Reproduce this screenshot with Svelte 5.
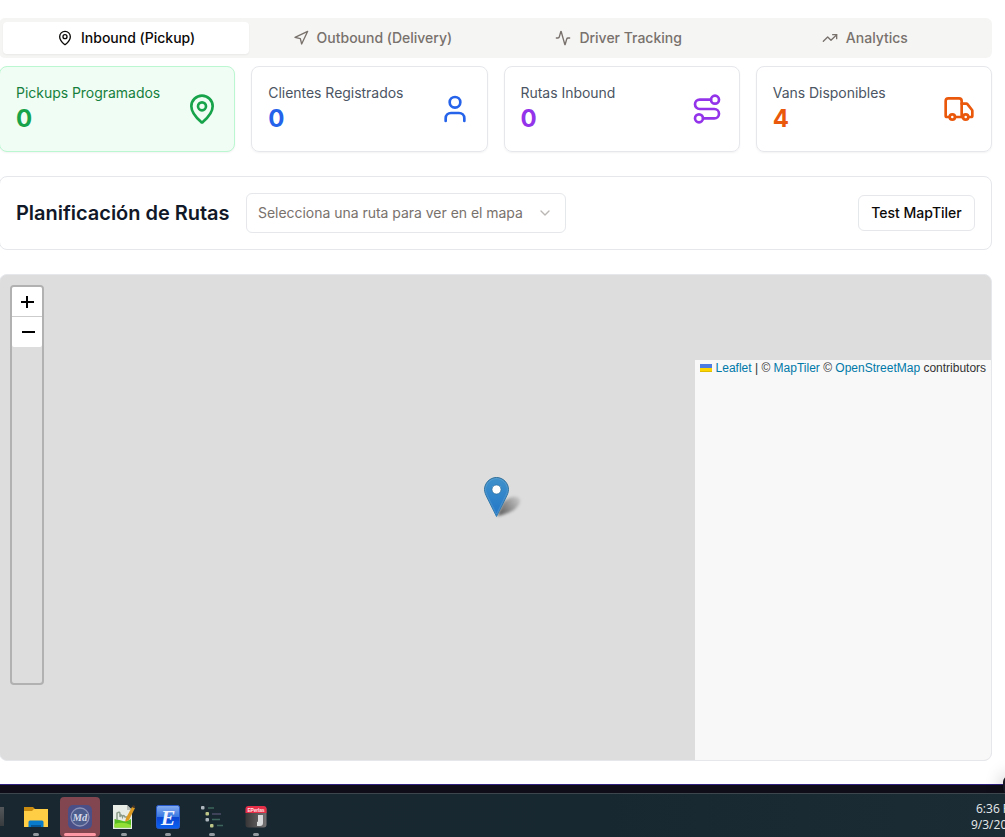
<script>
  const tabs = [
    { label: 'Inbound (Pickup)', icon: 'pin', active: true },
    { label: 'Outbound (Delivery)', icon: 'nav' },
    { label: 'Driver Tracking', icon: 'activity' },
    { label: 'Analytics', icon: 'trend' }
  ];
  const stats = [
    { label: 'Pickups Programados', value: 0, icon: 'pin', tone: 'green' },
    { label: 'Clientes Registrados', value: 0, icon: 'user', tone: 'blue' },
    { label: 'Rutas Inbound', value: 0, icon: 'route', tone: 'purple' },
    { label: 'Vans Disponibles', value: 4, icon: 'truck', tone: 'orange' }
  ];
</script>

{#snippet icon(name, size)}
  <svg width={size} height={size} viewBox="0 0 24 24" fill="none" stroke="currentColor" stroke-width="2" stroke-linecap="round" stroke-linejoin="round">
    {#if name === 'pin'}
      <path d="M20 10c0 4.993-5.539 10.193-7.399 11.799a1 1 0 0 1-1.202 0C9.539 20.193 4 14.993 4 10a8 8 0 0 1 16 0" />
      <circle cx="12" cy="10" r="3" />
    {:else if name === 'nav'}
      <polygon points="3 11 22 2 13 21 11 13 3 11" />
    {:else if name === 'activity'}
      <path d="M22 12h-2.48a2 2 0 0 0-1.93 1.46l-2.35 8.36a.25.25 0 0 1-.48 0L9.24 2.18a.25.25 0 0 0-.48 0l-2.35 8.36A2 2 0 0 1 4.49 12H2" />
    {:else if name === 'trend'}
      <polyline points="22 7 13.5 15.5 8.5 10.5 2 17" />
      <polyline points="16 7 22 7 22 13" />
    {:else if name === 'user'}
      <path d="M19 21v-2a4 4 0 0 0-4-4H9a4 4 0 0 0-4 4v2" />
      <circle cx="12" cy="7" r="4" />
    {:else if name === 'route'}
      <circle cx="6" cy="19" r="3" />
      <path d="M9 19h8.5a3.5 3.5 0 0 0 0-7h-11a3.5 3.5 0 0 1 0-7H15" />
      <circle cx="18" cy="5" r="3" />
    {:else if name === 'truck'}
      <path d="M14 18V6a2 2 0 0 0-2-2H4a2 2 0 0 0-2 2v11a1 1 0 0 0 1 1h2" />
      <path d="M15 18H9" />
      <path d="M19 18h2a1 1 0 0 0 1-1v-3.65a1 1 0 0 0-.22-.624l-3.48-4.35A1 1 0 0 0 17.52 8H14" />
      <circle cx="17" cy="18" r="2" />
      <circle cx="7" cy="18" r="2" />
    {:else}
      <path d="m6 9 6 6 6-6" />
    {/if}
  </svg>
{/snippet}

<div class="screen">
  <main>
    <div class="tabs">
      {#each tabs as t}
        <button class="tab" class:active={t.active}>{@render icon(t.icon, 16)}<span>{t.label}</span></button>
      {/each}
    </div>

    <div class="stats">
      {#each stats as s}
        <section class="card {s.tone}">
          <div>
            <p class="label">{s.label}</p>
            <p class="value">{s.value}</p>
          </div>
          {@render icon(s.icon, 32)}
        </section>
      {/each}
    </div>

    <section class="toolbar">
      <h2>Planificación de Rutas</h2>
      <button class="select"><span>Selecciona una ruta para ver en el mapa</span>{@render icon('chevron', 16)}</button>
      <button class="test">Test MapTiler</button>
    </section>

    <section class="map">
      <div class="zoom">
        <button class="in"><svg width="30" height="30" viewBox="0 0 30 30"><path d="M9 15h13M15 9v12" /></svg></button>
        <button class="out"><svg width="30" height="30" viewBox="0 0 30 30"><path d="M10 15h13" /></svg></button>
      </div>
      <svg class="marker" width="46" height="46" viewBox="0 0 46 46">
        <defs>
          <linearGradient id="pin" x1="0" y1="0" x2="0" y2="1"><stop offset="0" stop-color="#3f91ca" /><stop offset="1" stop-color="#2277c8" /></linearGradient>
          <linearGradient id="edge" x1="0" y1="0" x2="0" y2="1"><stop offset="0" stop-color="#2e6c97" /><stop offset="1" stop-color="#3883b7" /></linearGradient>
          <linearGradient id="fade" gradientUnits="userSpaceOnUse" x1="14" y1="38" x2="38" y2="20"><stop offset="0" stop-color="#000" stop-opacity=".6" /><stop offset=".5" stop-color="#000" stop-opacity=".32" /><stop offset="1" stop-color="#000" stop-opacity=".04" /></linearGradient>
          <filter id="soft" filterUnits="userSpaceOnUse" x="0" y="0" width="46" height="46"><feGaussianBlur stdDeviation="1.6" /></filter>
        </defs>
        <path d="M13 39 19 25Q29 17 35 21Q39 25 30 33Q23 37 13 39Z" fill="url(#fade)" filter="url(#soft)" />
        <path d="M12.500 .5C5.900 .5 .5 6.100 .5 12.500c0 2.800 1.400 5.700 2.300 7.500L12.500 39.500 22.200 20c.9-1.800 2.300-4.500 2.300-7.500C24.500 6.100 19.100 .5 12.500 .5Z" fill="url(#pin)" stroke="url(#edge)" />
        <path d="M12.500 1.600C6.500 1.600 1.600 6.600 1.600 12.500c0 2.600 1.300 5.400 2.200 7.100l8.700 17.700 8.700-17.700c.9-1.700 2.200-4.300 2.200-7.100 0-5.900-4.900-10.900-10.900-10.900Z" fill="none" stroke="#fff" stroke-opacity=".13" />
        <circle cx="12.500" cy="12.500" r="4.500" fill="#fff" stroke="#2e6c97" stroke-opacity=".65" />
      </svg>
      <div class="credit">
        <svg width="12" height="8" viewBox="0 0 12 8"><path fill="#4C7BE1" d="M0 0h12v4H0z" /><path fill="#FFD500" d="M0 4h12v3H0z" /><path fill="#E0BC00" d="M0 7h12v1H0z" /></svg>
        <a href="#leaflet">Leaflet</a> | © <a href="#maptiler">MapTiler</a> © <a href="#osm">OpenStreetMap</a> contributors
      </div>
    </section>
  </main>

  <div class="edge"></div>
  <div class="corner"></div>
  <footer>
    <div class="app first"><i class="stub"></i></div>
    <div class="app">
      <svg width="24" height="24" viewBox="0 0 24 24"><path d="M0 2h9l2 2-2 4H0z" fill="#c98b10" /><path d="M0 6h8l2-2h14v18H0z" fill="#ffce45" /><path d="M4.500 22v-5q0-1.500 1.500-1.500h12q1.500 0 1.500 1.500v5z" fill="#087bca" /><path d="M7 22v-2h10v2z" fill="#075696" /></svg>
      <b></b>
    </div>
    <div class="app on">
      <svg width="24" height="24" viewBox="0 0 24 24"><rect width="24" height="24" rx="5" fill="#4a5087" /><circle cx="12" cy="12" r="9" fill="#4c5c8c" stroke="#8d92b8" stroke-width="1.300" /><text x="12" y="15.800" text-anchor="middle" font-size="10.500" font-weight="700" font-style="italic" fill="#d5d8e8" font-family="Liberation Serif, serif">Md</text></svg>
      <b></b>
    </div>
    <div class="app">
      <svg width="24" height="24" viewBox="0 0 24 24"><path d="M1 0h14l5 5v19H1z" fill="#e8ece6" /><path d="M15 0v5h5" fill="#b7bdb6" /><path d="M2.500 14Q8 15 11 16t8-2v8.500H2.500z" fill="#57bd23" /><path d="M2.500 19q8-3 16.500 1v2.500H2.500z" fill="#92df36" /><path d="M5 15V8q3-2 3 1v3q1-4 2.500 0 1-3 2.500 0h3v3" fill="none" stroke="#8a9a88" stroke-width="1.500" /><path d="m13 17 1-4 6-11 3 1-6 12z" fill="#dc9c24" /><path d="m20 2 1-2 2 1v2z" fill="#493624" /></svg>
      <b></b>
    </div>
    <div class="app">
      <svg width="24" height="24" viewBox="0 0 24 24"><defs><linearGradient id="blue" x1="0" y1="0" x2="0" y2="1"><stop offset="0" stop-color="#86adf0" /><stop offset=".48" stop-color="#3a78e2" /><stop offset=".52" stop-color="#0c46d2" /><stop offset="1" stop-color="#0a62f2" /></linearGradient></defs><rect x=".5" y=".5" width="23" height="23" rx="2" fill="url(#blue)" stroke="#2758ca" /><text x="12" y="19.500" text-anchor="middle" font-size="22" font-weight="700" font-style="italic" fill="#f1f4ff" font-family="Liberation Serif, serif">E</text></svg>
      <b></b>
    </div>
    <div class="app">
      <svg width="24" height="24" viewBox="0 0 24 24"><g fill="#aeb7bd"><rect x="1" y="1" width="3.500" height="3.500" rx="1" /><rect x="5.500" y="13" width="3.500" height="3.500" rx="1" /></g><g fill="#bdc587"><rect x="5.500" y="7" width="3.500" height="3.500" rx="1" /><rect x="10" y="19" width="3.500" height="3.500" rx="1" /></g><path d="M8 3h6M12 14.500h8M17 20.500h6" stroke="#3d655b" stroke-width="1.700" /><path d="M12 9h9" stroke="#464963" stroke-width="1.700" /></svg>
      <b></b>
    </div>
    <div class="app">
      <svg width="24" height="24" viewBox="0 0 24 24"><defs><linearGradient id="grey"><stop offset="0" stop-color="#373536" /><stop offset="1" stop-color="#777475" /></linearGradient></defs><rect x="1.500" y="1.500" width="21" height="21" rx="3" fill="url(#grey)" /><path d="M1.500 8V4q0-3 3-3h15q3 0 3 3v4z" fill="#e52e48" /><text x="12" y="6.800" text-anchor="middle" font-size="5" font-weight="700" textLength="17" fill="#ffe2e5" font-family="Liberation Sans, sans-serif">EPerlas</text><path d="M14 10h5v8q0 3-3 3h-3v-4q1 0 1-1z" fill="#d9dadb" /></svg>
      <b></b>
    </div>
    <div class="clock"><span>6:36 PM</span><span>9/3/20</span></div>
  </footer>
</div>

<style>
  :global(body) { margin: 0; overflow: hidden; background: #fff; }
  .screen { position: relative; width: 1005px; height: 837px; overflow: hidden; display: flex; flex-direction: column; background: #fff; font-family: Inter, sans-serif; }
  .screen * { box-sizing: border-box; }
  svg { display: block; flex: none; }
  button { font: inherit; padding: 0; border: 0; background: #fff; }
  h2, p { margin: 0; }
  main { width: 993px; height: 784px; flex: none; margin-left: -1px; padding-top: 18px; }
  .tabs { display: grid; grid-template-columns: repeat(4, 1fr); height: 40px; padding: 4px; border-radius: 6px; background: #f5f5f4; }
  .tab { display: flex; align-items: center; justify-content: center; gap: 8px; border-radius: 4px; background: none; color: #78716c; font-size: 14px; font-weight: 500; line-height: 20px; letter-spacing: -.01px; }
  .tab.active { background: #fff; color: #0c0a09; box-shadow: 0 1px 2px #0000000d; }
  .stats { display: grid; grid-template-columns: repeat(4, 1fr); gap: 16px; margin-top: 8px; }
  .card { display: flex; align-items: center; justify-content: space-between; height: 86px; padding: 0 16px; border: 1px solid #e5e7eb; border-radius: 8px; box-shadow: 0 1px 2px #0000000d; }
  .label { font-size: 14px; line-height: 20px; color: #4b5563; letter-spacing: -.03px; }
  .value { font-size: 24px; line-height: 32px; font-weight: 700; }
  .green { color: #16a34a; background: #f0fdf4; border-color: #bbf7d0; }
  .green .label { color: #15803d; }
  .blue { color: #2563eb; }
  .purple { color: #9333ea; }
  .orange { color: #ea580c; }
  .toolbar { display: flex; align-items: center; gap: 16px; height: 74px; margin-top: 24px; padding: 0 16px; border: 1px solid #e5e7eb; border-radius: 8px; }
  h2 { width: 214px; font-size: 20px; line-height: 28px; font-weight: 600; letter-spacing: -.03px; color: #111827; white-space: nowrap; }
  .select { width: 320px; height: 40px; display: flex; align-items: center; justify-content: space-between; padding: 0 12px 0 11px; border: 1px solid #e5e7eb; border-radius: 6px; font-size: 14px; line-height: 20px; letter-spacing: -.03px; color: #78716c; white-space: nowrap; }
  .select span { padding-bottom: 1px; }
  .select svg { opacity: .5; }
  .test { width: 117px; height: 36px; margin-left: auto; padding-bottom: 1px; border: 1px solid #e5e7eb; border-radius: 6px; font-size: 14px; line-height: 20px; font-weight: 500; color: #0c0a09; }
  .map { position: relative; display: flex; justify-content: space-between; height: 487px; margin-top: 24px; border: 1px solid #e5e7eb; border-radius: 8px; overflow: hidden; background: #ddd; }
  .zoom { width: 34px; height: 400px; margin: 10px 0 0 10px; border: 2px solid #b1b1b1; border-radius: 4px; }
  .zoom button { display: block; width: 30px; height: 30px; overflow: hidden; }
  .zoom svg { fill: none; stroke: #000; stroke-width: 2; }
  .zoom .in { border-bottom: 1px solid #ccc; border-radius: 2px 2px 0 0; }
  .zoom .out { border-radius: 0 0 2px 2px; }
  .marker { position: absolute; left: 484px; top: 201.500px; }
  .credit { display: flex; align-items: flex-start; width: 296px; height: 400px; margin-top: 85px; padding: 0 5px; background: #f8f8f8; color: #333; font: 12px/16.800px "Liberation Sans", sans-serif; white-space: pre; }
  .credit svg { margin: 4px 3.600px 0 0; }
  .credit a { color: #0078a8; text-decoration: none; }
  .edge { flex: none; height: 9px; border-top: 1px solid #302080; background: #0f0e18; }
  .corner { position: absolute; left: 1003px; top: 776px; width: 12px; height: 18px; border-radius: 7px; background: #191923; box-shadow: 0 0 18px #0005; }
  footer { position: relative; display: flex; height: 44px; border-top: 1px solid #3c464c; background: linear-gradient(90deg, #182730, #182831 60%, #1b2c35); }
  .app { position: relative; width: 40px; height: 40px; margin: 3px 4px 0 0; padding: 8px; border-radius: 4px; flex: none; }
  .app.first { width: 12px; padding: 10px 0 0; }
  .stub { display: block; width: 4px; height: 19px; background: linear-gradient(#55585b, #373b3e); }
  .app b { position: absolute; left: 17px; bottom: 1px; width: 6px; height: 3px; border-radius: 2px; background: #929a9f; }
  .app.on { background: #81464f; }
  .app.on b { left: 4px; width: 32px; background: #ff98a5; }
  .clock { position: absolute; left: 971px; top: 7px; display: flex; flex-direction: column; color: #e7eaeb; font: 12px/16px "Open Sans", "Noto Sans", sans-serif; white-space: nowrap; }
  .clock span:first-child { margin-left: 5px; }
</style>
